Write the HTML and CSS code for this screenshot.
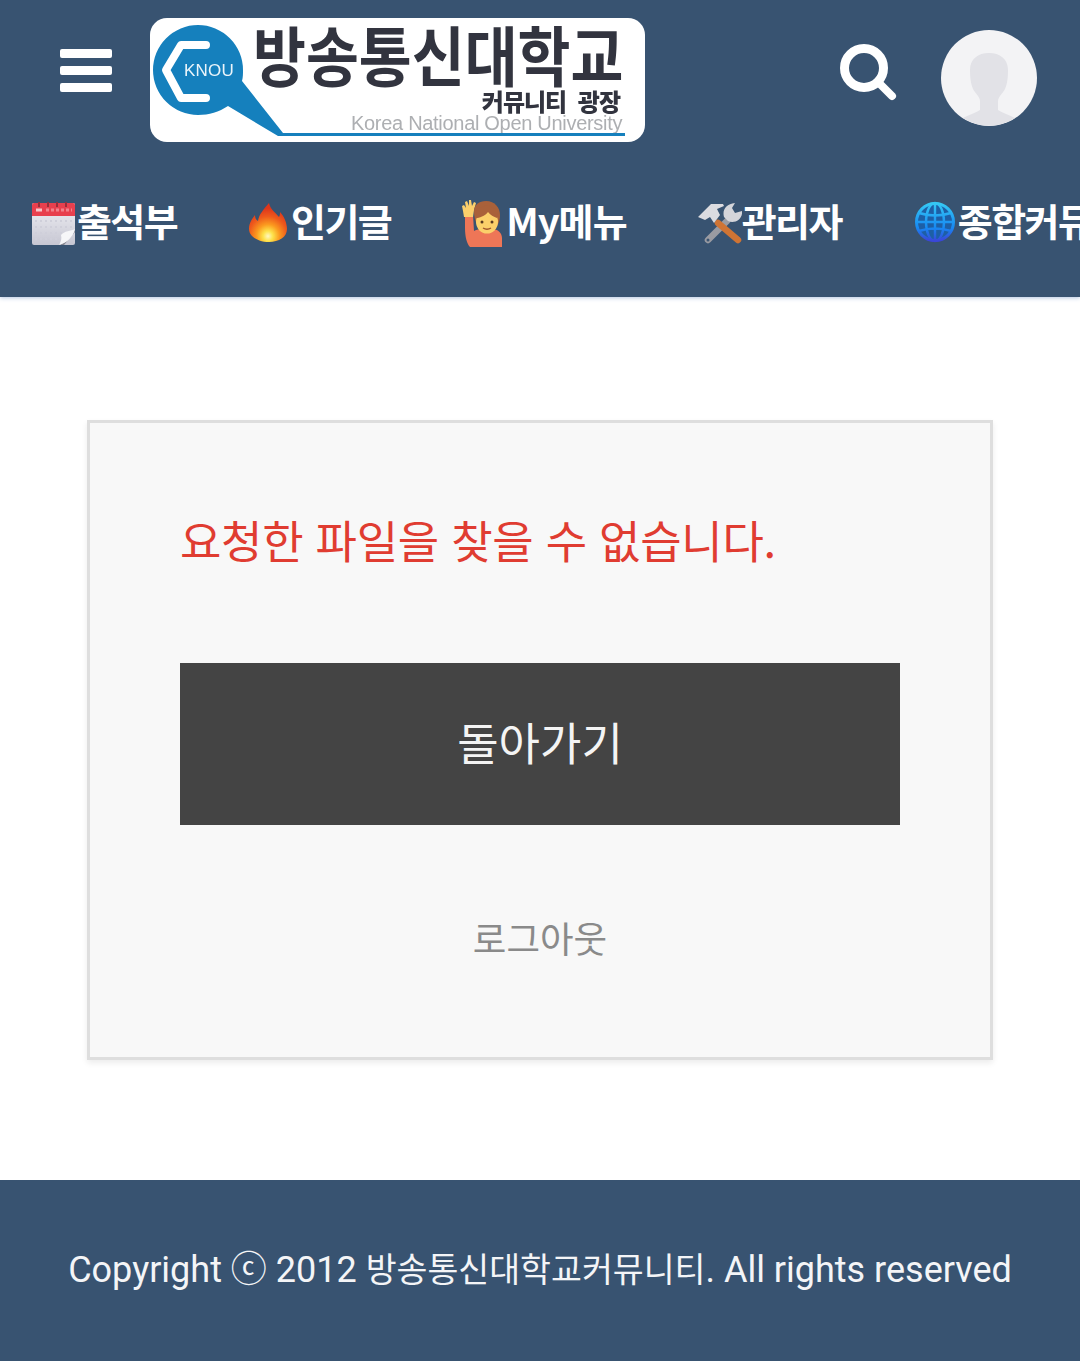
FILE: index.html
```html
<!DOCTYPE html>
<html lang="ko">
<head>
<meta charset="utf-8">
<title>방송통신대학교 커뮤니티 광장</title>
<link rel="stylesheet" href="styles.css">
</head>
<body>
<header class="site-header">
  <div class="top-row">
    <button class="menu-btn" aria-label="메뉴"><span></span><span></span><span></span></button>
    <a class="logo">
      <svg class="logo-mark" width="140" height="124" viewBox="0 0 140 124">
        <path d="M48 7a45 45 0 1 0 0 90c11 0 21-3 30-9l50 30 5-3L92 63c1-4 1-7 1-11A45 45 0 0 0 48 7Z" class="mark-blue"/>
        <path d="M56 27H31L16 52l15 28h25" class="mark-white"/>
        <text x="34" y="58" class="mark-text">KNOU</text>
      </svg>
      <span class="logo-title">방송통신대학교</span>
      <span class="logo-sub">커뮤니티 광장</span>
      <span class="logo-en">Korea National Open University</span>
      <span class="logo-line"></span>
    </a>
    <div class="top-actions">
      <svg class="search-icon" width="58" height="58" viewBox="0 0 58 58"><circle cx="24" cy="24" r="19.5" fill="none" stroke="#fff" stroke-width="9"/><path d="M39 39 L52 52" stroke="#fff" stroke-width="8" stroke-linecap="round"/></svg>
      <svg class="avatar" width="96" height="96" viewBox="0 0 96 96"><circle cx="48" cy="48" r="48" fill="#f3f3f5"/><path d="M48 23c-11 0-19 6-19 17 0 9 1 14 3 19 2 4 7 8 7 12v9c-4 3-12 5-17 8A48 48 0 0 0 74 88c-5-3-13-5-17-8v-9c0-4 5-8 7-12 2-5 3-10 3-19 0-11-8-17-19-17Z" fill="#e2e2e7"/></svg>
    </div>
  </div>
  <nav class="nav-row">
    <a class="nav-item">
      <svg class="emo" width="46" height="48" viewBox="0 0 46 48">
        <defs><linearGradient id="calBody" x1="0" y1="0" x2="0" y2="1"><stop offset="0" stop-color="#f1f1f5"/><stop offset="1" stop-color="#c6c6d2"/></linearGradient></defs>
        <rect x="1" y="4" width="43" height="42" rx="2" fill="url(#calBody)"/>
        <path d="M1 6a2 2 0 0 1 2-2h39a2 2 0 0 1 2 2v11H1Z" fill="#e8404e"/>
        <path d="M8 3v5M17 3v5M26 3v5M35 3v5" stroke="#96303b" stroke-width="2"/>
        <path d="M5 11h6" stroke="#f7c6ca" stroke-width="3"/>
        <path d="M15 11h26" stroke="#f1838c" stroke-width="3" stroke-dasharray="3 2"/>
        <g fill="none" stroke="#cfcfda" stroke-width="2" stroke-dasharray="2 3"><path d="M4 22h37M4 28h37M4 34h30M4 40h24"/></g>
        <path d="M44 30v3L33 46h-5c8-3 14-8 16-16Z" fill="#83848e"/>
        <path d="M44 30c-4 2-11 2-14 6 1 3 0 7-2 10 8-2 14-8 16-16Z" fill="#f6f6f8"/>
      </svg>
      <span>출석부</span>
    </a>
    <a class="nav-item">
      <svg class="emo" width="43" height="48" viewBox="0 0 43 48">
        <defs><radialGradient id="flame" cx=".5" cy=".85" r=".72"><stop offset="0" stop-color="#fff7c2"/><stop offset=".18" stop-color="#fde24a"/><stop offset=".42" stop-color="#fb9a1f"/><stop offset=".7" stop-color="#ee5a1c"/><stop offset="1" stop-color="#dd351b"/></radialGradient></defs>
        <path d="M21 4c1 6 6 9 10 14 1-2 1-3 1-5 4 4 7 11 7 17 0 8-8 13-18 13S1 38 1 30c0-6 3-10 6-14 0 3 1 5 3 6 1-7 6-12 11-18Z" fill="url(#flame)"/>
      </svg>
      <span>인기글</span>
    </a>
    <a class="nav-item nav-my">
      <svg class="emo" width="44" height="48" viewBox="0 0 44 48">
        <path d="M3 16h8l1 16c2-1 4-2 7-2h11c6 0 10 4 10 9v9H8c-3-3-5-10-5-19Z" fill="#ee7657"/>
        <path d="M1 12 0 7l2-1 2 3-1-6 2-1 2 5V1h2l1 6 2-4 2 1-2 7-1 7-9 0Z" fill="#fbcf6b"/>
        <path d="M12 12c0-6 5-10 12-10 9 0 14 7 14 14 0 4-1 8-3 11H16c-3-4-4-10-4-15Z" fill="#a9613a"/>
        <ellipse cx="25" cy="23" rx="11" ry="11.5" fill="#fbd06a"/>
        <path d="M14 19c3 0 9-2 12-6 2 3 6 5 9 6l1-8-11-5-10 4Z" fill="#a9613a"/>
        <circle cx="20" cy="23" r="1.5" fill="#5a3a20"/><circle cx="30" cy="23" r="1.5" fill="#5a3a20"/>
        <path d="M21 29q4 2.500 8 0" stroke="#a0562c" stroke-width="1.300" fill="none"/>
      </svg>
      <span>My메뉴</span>
    </a>
    <a class="nav-item">
      <svg class="emo" width="44" height="48" viewBox="0 0 44 48">
        <path d="M29 22 L10 41" stroke="#9a9ba2" stroke-width="6.500" stroke-linecap="round"/>
        <circle cx="10" cy="41" r="1.500" fill="#3a5471"/>
        <path d="M26 18c-2-7 2-13 11-14l-3 5 3 5 7-2c1 8-7 13-14 10Z" fill="#d4d5da"/>
        <path d="M20 24 L40 41" stroke="#cf7434" stroke-width="6.500" stroke-linecap="round"/>
        <path d="M0 18 13 5h12l1 2-7 3 3 6-6 8-4-6-5 3Z" fill="#dcdce0"/>
      </svg>
      <span>관리자</span>
    </a>
    <a class="nav-item">
      <svg class="emo" width="45" height="48" viewBox="0 0 45 48">
        <defs><linearGradient id="globe" x1="0" y1="0" x2="0" y2="1"><stop offset="0" stop-color="#35c8f4"/><stop offset=".65" stop-color="#1789f2"/><stop offset="1" stop-color="#3a46d8"/></linearGradient></defs>
        <circle cx="22" cy="23" r="18.500" fill="#1d5fa6" stroke="url(#globe)" stroke-width="3"/>
        <g fill="none" stroke="url(#globe)" stroke-width="2.400"><ellipse cx="22" cy="23" rx="9" ry="19"/><path d="M22 4v38M6 14q16 5 32 0M4 23h36M6 32q16-5 32 0"/></g>
      </svg>
      <span>종합커뮤니티</span>
    </a>
  </nav>
</header>

<main class="content">
  <section class="msg-card">
    <p class="msg-text">요청한 파일을 찾을 수 없습니다.</p>
    <a class="back-btn">돌아가기</a>
    <a class="logout">로그아웃</a>
  </section>
</main>

<footer class="site-footer"><span>Copyright ⓒ 2012 <span class="footer-ko">방송통신대학교커뮤니티</span>. All rights reserved</span></footer>
</body>
</html>
```
FILE: styles.css
```css
* { box-sizing: border-box; }
html, body { margin: 0; padding: 0; }
body {
  width: 1080px;
  height: 1361px;
  overflow: hidden;
  background: #fff;
  font-family: Roboto, "Noto Sans CJK KR", sans-serif;
  display: flex;
  flex-direction: column;
}
.site-header {
  height: 297px;
  background: #385371;
  box-shadow: 0 1px 4px rgba(90, 130, 190, .45);
  overflow: hidden;
  flex: none;
}
.top-row {
  display: flex;
  align-items: flex-start;
  height: 160px;
  padding: 18px 43px 0 60px;
}
.menu-btn {
  width: 52px;
  height: 43px;
  margin-top: 31px;
  padding: 0;
  border: 0;
  background: none;
  display: flex;
  flex-direction: column;
  justify-content: space-between;
  flex: none;
}
.menu-btn span { display: block; height: 9px; border-radius: 2px; background: #fff; }
.logo {
  position: relative;
  display: block;
  width: 495px;
  height: 124px;
  margin-left: 38px;
  border-radius: 17px;
  background: #fff;
  overflow: hidden;
  flex: none;
}
.logo-mark { position: absolute; left: 0; top: 0; filter: blur(.6px); }
.mark-blue { fill: #1580bd; }
.mark-white { fill: none; stroke: #fff; stroke-width: 8; stroke-linecap: round; stroke-linejoin: round; }
.mark-text { font: 400 17px "Liberation Sans", sans-serif; fill: #eaf4fa; letter-spacing: .2px; }
.logo-title {
  position: absolute;
  left: 103px;
  top: 2px;
  font: 700 65px/66px "Noto Sans CJK KR", sans-serif;
  color: #32343f;
  white-space: nowrap;
  transform: scaleX(.885);
  transform-origin: left top;
  filter: blur(.7px);
}
.logo-sub {
  position: absolute;
  right: 25px;
  top: 71px;
  font: 900 24px/24px "Noto Sans CJK KR", sans-serif;
  color: #32343f;
  letter-spacing: -1px;
  word-spacing: 6px;
  white-space: nowrap;
  filter: blur(.6px);
}
.logo-en {
  position: absolute;
  left: 201px;
  top: 95px;
  font: 400 20px/20px "Liberation Sans", sans-serif;
  color: #adafb2;
  letter-spacing: -.3px;
  white-space: nowrap;
  filter: blur(.7px);
}
.logo-line {
  position: absolute;
  left: 128px;
  right: 20px;
  top: 115px;
  height: 3px;
  background: #1580bd;
}
.top-actions {
  margin-left: auto;
  display: flex;
  align-items: flex-start;
  gap: 43px;
}
.search-icon { margin-top: 26px; }
.avatar { margin-top: 12px; }
.nav-row {
  display: flex;
  align-items: center;
  height: 48px;
  margin-top: 39px;
  padding-left: 31px;
  gap: 71px;
  white-space: nowrap;
}
.nav-item {
  display: flex;
  align-items: center;
  font: 700 38px/48px "Noto Sans CJK KR", sans-serif;
  color: #fff;
  letter-spacing: -1.6px;
  flex: none;
}
.nav-item span { padding-bottom: 6px; }
.nav-my { letter-spacing: -.9px; }
.emo { flex: none; filter: blur(.35px); }
.content {
  flex: 1;
  padding: 123px 87px 0;
}
.msg-card {
  height: 640px;
  padding: 86px 90px 0;
  background: #f8f8f8;
  border: 3px solid #dedede;
  box-shadow: 0 3px 6px rgba(0, 0, 0, .08);
  display: flex;
  flex-direction: column;
}
.msg-text {
  margin: 0 0 92px;
  height: 62px;
  font: 400 45px/62px "Noto Sans CJK KR", sans-serif;
  letter-spacing: -.3px;
  color: #e03c31;
  white-space: nowrap;
}
.back-btn {
  display: flex;
  align-items: center;
  justify-content: center;
  height: 162px;
  padding-bottom: 4px;
  background: #444;
  color: #f4f4f4;
  font: 400 45px/62px "Noto Sans CJK KR", sans-serif;
}
.logout {
  margin-top: 87px;
  text-align: center;
  font: 400 36.5px/52px "Noto Sans CJK KR", sans-serif;
  color: #8a8a8a;
}
.site-footer {
  height: 181px;
  padding-bottom: 10px;
  flex: none;
  background: #385371;
  color: #f4f5f7;
  display: flex;
  align-items: center;
  justify-content: center;
  font-size: 36px;
  white-space: nowrap;
}
.footer-ko { font-size: 33.6px; }
```
